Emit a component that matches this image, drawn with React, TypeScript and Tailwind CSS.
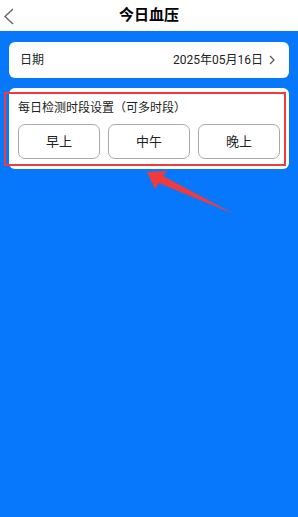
import React from "react";

const slots = ["早上", "中午", "晚上"];

const App = () => {
  return (
    <div className="relative flex h-[517px] w-full flex-col bg-[#0778fb] font-['Roboto','Noto_Sans_CJK_SC',sans-serif] text-[#222]">
      <header className="relative flex h-[31px] items-center justify-center bg-white">
        <svg
          className="absolute left-[3px] top-[8px]"
          width="12"
          height="17"
          viewBox="0 0 12 17"
          fill="none"
        >
          <polyline points="10,1 2,8.5 10,16" stroke="#666" strokeWidth="1.4" />
        </svg>
        <h1 className="text-[15px] font-bold text-black">今日血压</h1>
      </header>

      <section className="mx-[9px] mt-[11px] flex h-[36px] items-center justify-between rounded-[6px] bg-white pl-[11px] pr-[14px] text-[12px]">
        <span>日期</span>
        <div className="flex items-center gap-[6px]">
          <span>2025年05月16日</span>
          <svg width="6" height="10" viewBox="0 0 6 10" fill="none">
            <polyline points="1,1 5,5 1,9" stroke="#555" strokeWidth="1.2" />
          </svg>
        </div>
      </section>

      <section className="relative mx-[9px] mt-[10px] rounded-[6px] bg-white px-[9px] pb-[10px] pt-[12px]">
        <p className="text-[12px] leading-[16px]">每日检测时段设置（可多时段）</p>
        <div className="mt-[8px] grid grid-cols-3 gap-2">
          {slots.map((slot) => (
            <button
              key={slot}
              className="flex h-[35px] items-center justify-center rounded-[7px] border border-[#aaa] bg-white text-[13px] text-[#222]"
            >
              {slot}
            </button>
          ))}
        </div>
        <div className="pointer-events-none absolute -left-[5px] top-[4px] right-[3px] bottom-[3px] border-2 border-[#f23a3d]" />
      </section>

      <svg
        className="pointer-events-none absolute left-0 top-0"
        width="298"
        height="517"
        viewBox="0 0 298 517"
      >
        <polygon
          points="147,172 167,171 163,176 234,214 159,183 155,189"
          fill="#f23a3d"
        />
      </svg>
    </div>
  );
};

export default App;
